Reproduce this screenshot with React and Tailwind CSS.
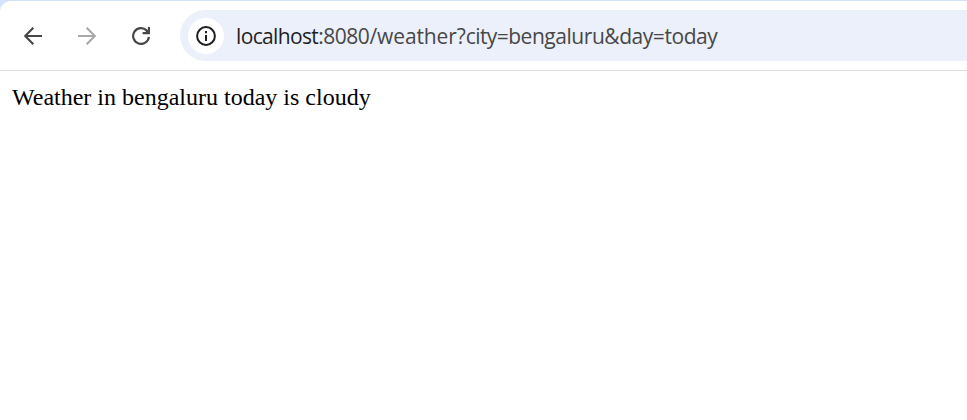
function BackArrow() {
  return (
    <svg className="size-[18px]" viewBox="0 0 18 18" fill="none" stroke="#474747" strokeWidth="2.2">
      <path d="M18 9H1.8M9.3 .8 1.2 9l8.1 8.2" />
    </svg>
  );
}

function ForwardArrow() {
  return (
    <svg className="size-[18px]" viewBox="0 0 18 18" fill="none" stroke="#a9a9a9" strokeWidth="2.2">
      <path d="M0 9h16.2M8.7 .8 16.8 9l-8.1 8.2" />
    </svg>
  );
}

function Reload() {
  return (
    <svg className="size-[18px]" viewBox="0 0 18 18" fill="none" stroke="#474747" strokeWidth="2.2">
      <path d="M16.9 9.8A7.9 7.9 0 1 1 14.6 3.4L17 5.8" />
      <path d="M17 0v6.2h-6.4" />
      <path d="M14.5 3.2 17 5.8V6h-4z" fill="#474747" stroke="none" />
    </svg>
  );
}

function Info() {
  return (
    <svg className="size-5" viewBox="0 0 20 20" fill="none" stroke="#1f1f1f" strokeWidth="2">
      <circle cx="10" cy="10" r="8.9" />
      <path d="M10 9v6M10 5v2.2" />
    </svg>
  );
}

export default function App() {
  return (
    <div className="h-[420px] w-full overflow-hidden bg-[#d3e3fd] pt-px">
      <div className="h-full rounded-tl-[11px] bg-white">
        <header className="flex h-[70px] items-center border-b border-[#dedede] pl-6">
          <nav className="flex items-center gap-9">
            <BackArrow />
            <ForwardArrow />
            <Reload />
          </nav>
          <div className="ml-[30px] flex h-[51px] flex-1 items-center rounded-l-full bg-[#ecf0fa] pl-2">
            <div className="flex size-9 items-center justify-center rounded-full bg-white">
              <Info />
            </div>
            <div className="ml-3 whitespace-nowrap font-['Open_Sans','Noto_Sans',sans-serif] text-[21px] leading-[30px] tracking-[-0.45px] text-[#474747]">
              <span className="tracking-[-0.65px] text-[#1f1f1f]">localhost</span>
              :8080<span className="tracking-[-0.1px]">/weather?</span>
              <span className="tracking-[-0.6px]">city=</span>bengaluru&amp;day=today
            </div>
          </div>
        </header>
        <main className="px-3 pt-3 font-['Liberation_Serif','Times_New_Roman',serif] text-2xl leading-[28px] text-black">
          Weather in bengaluru today is cloudy
        </main>
      </div>
    </div>
  );
}
